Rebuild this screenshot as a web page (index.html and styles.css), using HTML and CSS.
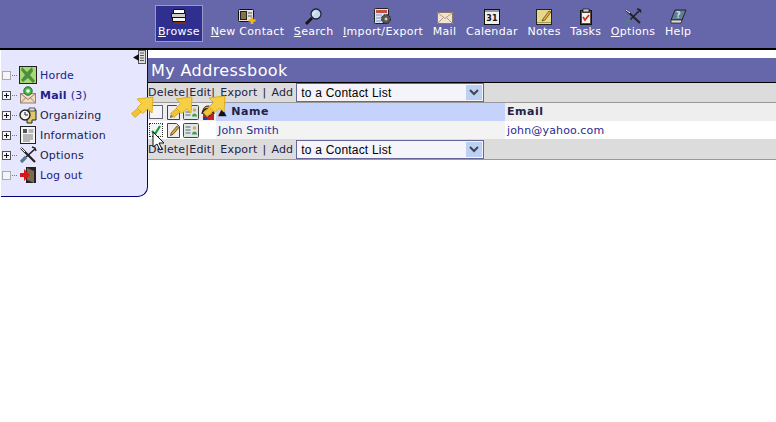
FILE: index.html
```html
<!DOCTYPE html>
<html lang="en">
  <head>
    <meta charset="utf-8">
    <title>My Addressbook</title>
    <link rel="stylesheet" href="styles.css">
  </head>
  <body>
    <!-- Top menu -->
    <header class="menubar">
      <nav class="menu">
        <a class="menu-item active">
          <svg width="22" height="17" viewBox="0 0 22 17"><path d="M6 13h12v3H6z" fill="#7a3018"/><path d="M4.500 9.500h13v4h-13z" fill="#f4f4f4" stroke="#111"/><path d="M3.500 5.500h14v4h-14z" fill="#ccc" stroke="#111"/><path d="M5.500 1.500h11v4h-11z" fill="#fff" stroke="#111"/></svg>
          <span><u>B</u>rowse</span>
        </a>
        <a class="menu-item">
          <svg width="22" height="17" viewBox="0 0 22 17"><rect x="2.500" y="1.500" width="15" height="12" rx="1" fill="#e4e4dc" stroke="#111"/><rect x="4.500" y="3.500" width="6" height="8" fill="#8a7048" stroke="#222"/><path d="M12 5h4M12 8h4" stroke="#555"/><path d="M16 9v7M12.500 12.500h7" stroke="#f4b810" stroke-width="2.600"/></svg>
          <span><u>N</u>ew Contact</span>
        </a>
        <a class="menu-item">
          <svg width="22" height="17" viewBox="0 0 22 17"><path d="M9 10l-6 6" stroke="#151515" stroke-width="3"/><circle cx="13" cy="6" r="5" fill="#c4d8ee" stroke="#223" stroke-width="1.300"/><path d="M10 7c0-2 1-3 3-3" fill="none" stroke="#fff"/></svg>
          <span><u>S</u>earch</span>
        </a>
        <a class="menu-item">
          <svg width="22" height="17" viewBox="0 0 22 17"><rect x="2.500" y=".5" width="14" height="15" rx="1" fill="#dfe4f0" stroke="#222"/><rect x="4" y="2" width="11" height="3" fill="#c05040"/><path d="M4 7h6M4 10h5M4 13h5" stroke="#7799cc"/><circle cx="14" cy="11" r="4.500" fill="#555" stroke="#222" stroke-dasharray="2 1"/><circle cx="14" cy="11" r="1.500" fill="#ccc"/></svg>
          <span><u>I</u>mport/Export</span>
        </a>
        <a class="menu-item">
          <svg width="22" height="17" viewBox="0 0 22 17"><rect x="3.500" y="4.500" width="15" height="11" fill="#f0e4d0" stroke="#8a7a6a"/><path d="M3.500 4.500l7.500 6 7.500-6M3.500 15.500l6-6M18.500 15.500l-6-6" fill="none" stroke="#b09a80"/></svg>
          <span>Mail</span>
        </a>
        <a class="menu-item">
          <svg width="22" height="17" viewBox="0 0 22 17"><rect x="3.500" y="1.500" width="15" height="15" fill="#eee" stroke="#111"/><rect x="4" y="2" width="14" height="2" fill="#999"/><text x="11" y="13" class="cal-day">31</text></svg>
          <span>Calendar</span>
        </a>
        <a class="menu-item">
          <svg width="22" height="17" viewBox="0 0 22 17"><rect x="3.500" y="1.500" width="15" height="15" fill="#e6d88a" stroke="#222"/><path d="M4 14.500h14" stroke="#a89a50"/><path d="M10 11l6-8 2 1-6 8-3 1z" fill="#f0b030" stroke="#222" stroke-width=".6"/></svg>
          <span>Notes</span>
        </a>
        <a class="menu-item">
          <svg width="22" height="17" viewBox="0 0 22 17"><rect x="5.500" y="2.500" width="11" height="14" fill="#5f4e3c" stroke="#111"/><rect x="7" y="5" width="8" height="10" fill="#f2f2f2"/><rect x="8" y="1" width="6" height="3" fill="#ccc" stroke="#111" stroke-width=".7"/><path d="M8 9l2 3 4-5" fill="none" stroke="#d03020" stroke-width="1.800"/></svg>
          <span>Tasks</span>
        </a>
        <a class="menu-item">
          <svg width="22" height="17" viewBox="0 0 22 17"><path d="M4 2l14 13" stroke="#222" stroke-width="2"/><path d="M4 2l4 3" stroke="#fff"/><path d="M18 2L8 12" stroke="#222" stroke-width="1.600"/><path d="M8 11l-5 5" stroke="#557a90" stroke-width="3.200"/><path d="M15 1l3 .5 1 3" fill="none" stroke="#222" stroke-width="1.400"/></svg>
          <span><u>O</u>ptions</span>
        </a>
        <a class="menu-item">
          <svg width="22" height="17" viewBox="0 0 22 17"><path d="M8 2h11l-4 10H4z" fill="#5f8098" stroke="#222"/><path d="M4 12h11l-1 3H4z" fill="#ddd" stroke="#222" stroke-width=".8"/><text x="11.500" y="10" class="help-mark">?</text></svg>
          <span>Help</span>
        </a>
      </nav>
    </header>

    <div class="page">
      <!-- Sidebar tree -->
      <aside class="sidebar">
        <div class="sidebar-toggle">
          <svg width="15" height="15" viewBox="0 0 15 15"><rect x="6.500" y=".5" width="7" height="13" fill="#ddd" stroke="#555"/><path d="M8 3h4M8 5.500h4M8 8h4M8 10.500h4" stroke="#555"/><path d="M7 4L1 7.500 7 11z" fill="#111"/></svg>
        </div>
        <ul class="tree">
          <li class="tree-row">
            <i class="box"></i><i class="dots"></i>
            <svg class="tree-icon" viewBox="0 0 18 18"><rect x=".5" y=".5" width="17" height="17" fill="#a8d878" stroke="#222"/><path d="M3 1l5 5 5-5 1 4-3 4 5 6-2 2-5-5-5 4-2-2 4-5-4-5z" fill="#4d8f3c"/></svg>
            <a>Horde</a>
          </li>
          <li class="tree-row">
            <i class="box plus"></i><i class="dots"></i>
            <svg class="tree-icon" viewBox="0 0 18 18"><rect x="1.500" y="7.500" width="15" height="9.500" fill="#f2dcc4" stroke="#97806c"/><path d="M1.500 7.500l7.500 6 7.500-6M1.500 17l5-5M16.500 17l-5-5" fill="none" stroke="#97806c"/><circle cx="9" cy="5" r="4.200" fill="#4bb84b" stroke="#1d6b1d"/><circle cx="9" cy="5" r="1.800" fill="#fff"/></svg>
            <a class="strong">Mail</a> <a class="count">(3)</a>
          </li>
          <li class="tree-row">
            <i class="box plus"></i><i class="dots"></i>
            <svg class="tree-icon" viewBox="0 0 18 18"><path d="M8 4h9v10h-4v3H8z" fill="#e0c868" stroke="#222"/><path d="M10 2h6v3h-6z" fill="#ddd" stroke="#222" stroke-width=".7"/><circle cx="6" cy="9" r="5" fill="#f2f2f2" stroke="#222" stroke-width="1.400"/><path d="M6 6v3h3" fill="none" stroke="#222"/></svg>
            <a class="plain">Organizing</a>
          </li>
          <li class="tree-row">
            <i class="box plus"></i><i class="dots"></i>
            <svg class="tree-icon" viewBox="0 0 18 18"><rect x="1.500" y=".5" width="15" height="17" fill="#f4f4f4" stroke="#222"/><rect x="4" y="3" width="4" height="4" fill="#555"/><path d="M9.500 4h5M9.500 6h5M4 9h10M4 11h10M4 13h10M4 15h7" stroke="#777"/></svg>
            <a class="plain">Information</a>
          </li>
          <li class="tree-row">
            <i class="box plus"></i><i class="dots"></i>
            <svg class="tree-icon" viewBox="0 0 18 18"><path d="M2 2l14 14" stroke="#222" stroke-width="2.200"/><path d="M2 2l4 4" stroke="#fff"/><path d="M16 3L7 11" stroke="#222" stroke-width="1.600"/><path d="M7 11l-5 5" stroke="#557a90" stroke-width="3.200"/><path d="M13 1l3 1 1 3" fill="none" stroke="#222" stroke-width="1.400"/></svg>
            <a class="plain">Options</a>
          </li>
          <li class="tree-row">
            <i class="box"></i><i class="dots"></i>
            <svg class="tree-icon" viewBox="0 0 18 18"><rect x="7" y="1" width="10" height="16" fill="#222"/><path d="M8 2l7 3v12l-7-3z" fill="#7a6a50"/><path d="M1 7h4V3l6 6-6 6v-4H1z" fill="#d81818"/></svg>
            <a>Log out</a>
          </li>
        </ul>
      </aside>

      <!-- Addressbook -->
      <main class="content">
        <h1 class="title">My Addressbook</h1>

        <div class="toolbar">
          <a>Delete</a><b>|</b><a>Edit</a><b>|</b><a class="wide">Export</a><b class="wide">|</b><a class="wide">Add</a>
          <div class="select"><span>to a Contact List</span><i class="select-btn"><svg width="10" height="7" viewBox="0 0 10 7"><path d="M1 1l4 4 4-4" fill="none" stroke="#445" stroke-width="2"/></svg></i></div>
        </div>

        <div class="row row-head">
          <div class="cell-actions">
            <i class="check"></i>
            <svg class="small-icon" viewBox="0 0 15 15"><path d="M1.500 .5h9l3 3v11h-12z" fill="#eee" stroke="#444"/><path d="M5 10l6-7 2 1.500-6 7-2.500 1z" fill="#e8a020" stroke="#222" stroke-width=".6"/></svg>
            <svg class="small-icon wide-icon" viewBox="0 0 16 15"><rect x=".5" y=".5" width="15" height="14" rx="1" fill="#dfe6e6" stroke="#444"/><path d="M2.500 4h5M2.500 7h5M2.500 10h5" stroke="#567"/><circle cx="11.500" cy="5" r="1.800" fill="#d8a860"/><path d="M9 11.500c0-4 5-4 5 0z" fill="#4a9a50"/></svg>
            <svg class="small-icon" viewBox="0 0 15 15"><rect x="2" y="9" width="11" height="6" fill="#cc2020"/><rect x="2" y="12" width="4" height="3" fill="#2040a0"/><circle cx="7" cy="6" r="5" fill="#e8b020" stroke="#222"/><path d="M1 9c1-7 11-7 12 0" fill="none" stroke="#222" stroke-width="1.400"/></svg>
          </div>
          <div class="cell-name"><span class="sort">&#9650;</span> Name</div>
          <div class="cell-email">Email</div>
        </div>

        <div class="row row-contact">
          <div class="cell-actions">
            <i class="check checked"><svg width="12" height="12" viewBox="0 0 12 12"><path d="M2 7l3 3 5-8" fill="none" stroke="#1a9a30" stroke-width="2.200"/></svg></i>
            <svg class="small-icon" viewBox="0 0 15 15"><path d="M1.500 .5h9l3 3v11h-12z" fill="#eee" stroke="#444"/><path d="M5 10l6-7 2 1.500-6 7-2.500 1z" fill="#e8a020" stroke="#222" stroke-width=".6"/></svg>
            <svg class="small-icon wide-icon" viewBox="0 0 16 15"><rect x=".5" y=".5" width="15" height="14" rx="1" fill="#dfe6e6" stroke="#444"/><path d="M2.500 4h5M2.500 7h5M2.500 10h5" stroke="#567"/><circle cx="11.500" cy="5" r="1.800" fill="#d8a860"/><path d="M9 11.500c0-4 5-4 5 0z" fill="#4a9a50"/></svg>
          </div>
          <div class="cell-name"><a>John Smith</a></div>
          <div class="cell-email"><a>john@yahoo.com</a></div>
        </div>

        <div class="toolbar toolbar-bottom">
          <a>Delete</a><b>|</b><a>Edit</a><b>|</b><a class="wide">Export</a><b class="wide">|</b><a class="wide">Add</a>
          <div class="select"><span>to a Contact List</span><i class="select-btn"><svg width="10" height="7" viewBox="0 0 10 7"><path d="M1 1l4 4 4-4" fill="none" stroke="#445" stroke-width="2"/></svg></i></div>
        </div>
      </main>
    </div>

    <!-- Callout arrows and mouse cursor drawn over the table -->
    <svg class="callout callout-1" viewBox="0 0 24 24"><path d="M22 1L21 17 16.500 13 12 17.500 6 12 10.500 7.500 6 3z" fill="#f7cf45" stroke="#dcae20"/><path d="M0.500 17.500l6-5 3.500 3.500-6 5.500z" fill="#f0c438" stroke="#dcae20"/></svg>
    <svg class="callout callout-2" viewBox="0 0 24 24"><path d="M22 1L21 17 16.500 13 12 17.500 6 12 10.500 7.500 6 3z" fill="#f7cf45" stroke="#dcae20"/><path d="M0.500 17.500l6-5 3.500 3.500-6 5.500z" fill="#f0c438" stroke="#dcae20"/></svg>
    <svg class="callout callout-3" viewBox="0 0 24 24"><path d="M22 1L21 17 16.500 13 12 17.500 6 12 10.500 7.500 6 3z" fill="#f7cf45" stroke="#dcae20"/><path d="M0.500 17.500l6-5 3.500 3.500-6 5.500z" fill="#f0c438" stroke="#dcae20"/></svg>
    <svg class="cursor" viewBox="0 0 12 20"><path d="M1 1v15l4-3 3 6 2-1-3-6h5z" fill="#fff" stroke="#111"/></svg>
  </body>
</html>
```

FILE: styles.css
```css
/* General */
body {
  margin: 0;
  font-family: "DejaVu Sans", Verdana, sans-serif;
  font-size: 11px;
  background: #fff;
  color: #224;
  overflow: hidden;
}

/* Top menu */
.menubar {
  height: 48px;
  background-color: #6666aa;
  border-bottom: 2px solid #000;
}

.menu {
  display: flex;
  padding: 5px 0 0 155px;
}

.menu-item {
  box-sizing: border-box;
  height: 37px;
  padding: 3px 4.800px 0;
  display: flex;
  flex-direction: column;
  align-items: center;
  color: #fff;
  white-space: nowrap;
  line-height: 13px;
  letter-spacing: .3px;
}

/* Icons may hang over short labels such as Mail */
.menu-item svg {
  display: block;
  margin: 0 -3px;
}

.menu-item.active {
  background-color: #2f2f8f;
  border: 1px solid #9999cc;
  padding: 2px 2px 0;
  margin-right: 3px;
}

.cal-day {
  font-size: 8px;
  font-weight: bold;
  text-anchor: middle;
  fill: #111;
}

.help-mark {
  font-size: 8px;
  font-weight: bold;
  text-anchor: middle;
  fill: #dde;
}

/* Page */
.page {
  display: flex;
  align-items: flex-start;
}

/* Sidebar */
.sidebar {
  box-sizing: border-box;
  width: 147px;
  height: 147px;
  margin-left: 1px;
  background-color: #e6e6ff;
  border-right: 1px solid #000080;
  border-bottom: 1px solid #000080;
  border-bottom-right-radius: 10px;
  position: relative;
  letter-spacing: .2px;
}

.sidebar-toggle {
  position: absolute;
  top: 0;
  right: 0;
}

.tree {
  list-style: none;
  margin: 0;
  padding: 15px 0 0 1px;
}

.tree-row {
  height: 20px;
  display: flex;
  align-items: center;
}

.tree-row a {
  color: #22228a;
  margin-right: 4px;
}

.tree-row a.strong {
  font-weight: bold;
}

.tree-row a.plain {
  color: #222244;
}

.box {
  box-sizing: border-box;
  width: 9px;
  height: 9px;
  border: 1px solid #aaa;
  background-color: #f4f4fa;
  position: relative;
}

.box.plus {
  border-color: #555;
}

.box.plus::before {
  content: "";
  position: absolute;
  left: 1px;
  top: 3px;
  width: 5px;
  height: 1px;
  background: #111;
}

.box.plus::after {
  content: "";
  position: absolute;
  left: 3px;
  top: 1px;
  width: 1px;
  height: 5px;
  background: #111;
}

.dots {
  width: 5px;
  margin: 0 2px 0 1px;
  border-top: 1px dotted #777;
}

.tree-icon {
  width: 18px;
  height: 18px;
  margin-right: 3px;
}

/* Addressbook */
.content {
  flex: 1;
  padding-top: 8px;
}

.title {
  margin: 0;
  height: 23px;
  padding: 1px 0 0 3px;
  line-height: 24px;
  font-size: 16px;
  font-weight: normal;
  letter-spacing: .4px;
  color: #fff;
  background-color: #6666aa;
  border-bottom: 1px solid #000;
}

.toolbar {
  box-sizing: border-box;
  height: 20px;
  display: flex;
  align-items: center;
  background-color: #dcdcdc;
  border-bottom: 1px solid #999;
  color: #224;
  letter-spacing: .2px;
}

.toolbar-bottom {
  height: 21px;
  padding-top: 1px;
}

.toolbar a.wide,
.toolbar b.wide {
  margin-left: 5px;
}

.toolbar b {
  font-weight: normal;
}

.select {
  box-sizing: border-box;
  width: 188px;
  height: 19px;
  margin-left: 3px;
  padding: 0 1px 0 4px;
  display: flex;
  align-items: center;
  justify-content: space-between;
  background-color: #f4f4fa;
  border: 1px solid #666699;
  font-family: "Liberation Sans", Arial, sans-serif;
  font-size: 12px;
  letter-spacing: .2px;
  color: #000;
}

.select-btn {
  width: 16px;
  height: 15px;
  display: flex;
  align-items: center;
  justify-content: center;
  background-color: #bcd0f4;
}

.row {
  height: 18px;
  display: flex;
  align-items: center;
}

.cell-actions {
  width: 68px;
  height: 100%;
  display: flex;
  align-items: center;
  padding-left: 1px;
  box-sizing: border-box;
  gap: 2px;
}

.cell-name {
  width: 289px;
  height: 100%;
  line-height: 18px;
  padding-left: 2px;
  box-sizing: border-box;
}

.cell-email {
  flex: 1;
  height: 100%;
  line-height: 18px;
  padding-left: 2px;
}

.row-head {
  background-color: #eeeeee;
  font-weight: bold;
  letter-spacing: .5px;
}

.row-head .cell-name {
  background-color: #c5d2fb;
}

.row-contact {
  letter-spacing: .15px;
}

.row-contact .cell-name,
.row-contact .cell-email {
  line-height: 20px;
}

.row-contact .cell-name {
  background-color: #f3f3f3;
}

.row-contact a {
  color: #2a2a90;
}

.sort {
  font-size: 11px;
  color: #111;
}

.check {
  box-sizing: border-box;
  width: 14px;
  height: 14px;
  margin-right: 1px;
  border: 1px solid #667;
  background-color: #f4f4fa;
  display: block;
}

.check.checked {
  border: 1px dotted #333;
}

.small-icon {
  width: 15px;
  height: 15px;
}

.wide-icon {
  width: 16px;
}

/* Overlays */
.callout {
  position: absolute;
  width: 24px;
  height: 24px;
}

.callout-1 {
  left: 131px;
  top: 96px;
}

.callout-2 {
  left: 170px;
  top: 96px;
}

.callout-3 {
  left: 203px;
  top: 95px;
}

.cursor {
  position: absolute;
  left: 152px;
  top: 131px;
  width: 12px;
  height: 20px;
}
```
